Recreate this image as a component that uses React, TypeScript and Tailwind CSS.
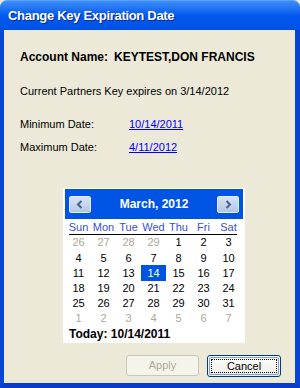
import React from "react";

const FONT = { fontFamily: '"Liberation Sans", Tahoma, Arial, sans-serif' };

const weeks: { d: number; dim?: boolean }[][] = [
  [{ d: 26, dim: true }, { d: 27, dim: true }, { d: 28, dim: true }, { d: 29, dim: true }, { d: 1 }, { d: 2 }, { d: 3 }],
  [{ d: 4 }, { d: 5 }, { d: 6 }, { d: 7 }, { d: 8 }, { d: 9 }, { d: 10 }],
  [{ d: 11 }, { d: 12 }, { d: 13 }, { d: 14 }, { d: 15 }, { d: 16 }, { d: 17 }],
  [{ d: 18 }, { d: 19 }, { d: 20 }, { d: 21 }, { d: 22 }, { d: 23 }, { d: 24 }],
  [{ d: 25 }, { d: 26 }, { d: 27 }, { d: 28 }, { d: 29 }, { d: 30 }, { d: 31 }],
  [{ d: 1, dim: true }, { d: 2, dim: true }, { d: 3, dim: true }, { d: 4, dim: true }, { d: 5, dim: true }, { d: 6, dim: true }, { d: 7, dim: true }],
];

function NavButton({ dir }: { dir: "left" | "right" }) {
  return (
    <div className="w-[22px] h-[17px] rounded-[2px] border border-[#e6ecf8] bg-gradient-to-b from-[#d7e2f6] to-[#b4c6ea] flex items-center justify-center">
      <svg width="8" height="9" viewBox="0 0 8 9">
        {dir === "left" ? (
          <path d="M5.5 1 L2 4.5 L5.5 8" stroke="#4d6185" strokeWidth="2" fill="none" />
        ) : (
          <path d="M2.5 1 L6 4.5 L2.5 8" stroke="#4d6185" strokeWidth="2" fill="none" />
        )}
      </svg>
    </div>
  );
}

export default function App() {
  return (
    <div className="w-[300px] h-[388px] flex flex-col bg-[#ece9d8] text-[11px] text-black" style={FONT}>
      {/* Title bar */}
      <div className="h-[30px] shrink-0 rounded-t-[7px] bg-gradient-to-b from-[#3d8ef8] via-[#0058ee] to-[#0052e6] border-t border-[#5aa0ff] flex items-center pl-[8px]">
        <span
          className="text-white font-bold text-[13px] tracking-[-0.3px]"
          style={{ textShadow: "1px 1px 0 #0a2a8a" }}
        >
          Change Key Expiration Date
        </span>
      </div>
      {/* Window body */}
      <div className="flex-1 flex flex-col border-l-[4px] border-r-[5px] border-b-[5px] border-l-[#0846d8] border-r-[#0842d2] border-b-[#0a3ac8]">
        <div className="flex-1 flex flex-col bg-[#ece9d8] pl-[16px] pr-[8px]">
          <div className="mt-[20px] h-[14px] flex items-center font-bold text-[12px]">
            <span>Account Name:</span>
            <span className="ml-[6px]">KEYTEST,DON FRANCIS</span>
          </div>
          <div className="mt-[20px] h-[14px] flex items-center">Current Partners Key expires on 3/14/2012</div>
          <div className="mt-[19px] h-[14px] flex items-center">
            <span className="w-[109px]">Minimum Date:</span>
            <span className="text-[#0000ff] underline">10/14/2011</span>
          </div>
          <div className="mt-[9px] h-[14px] flex items-center">
            <span className="w-[109px]">Maximum Date:</span>
            <span className="text-[#0000ff] underline">4/11/2012</span>
          </div>
          {/* Calendar */}
          <div className="mt-[34px] ml-[43px] w-[182px] h-[155px] bg-white flex flex-col px-[2px] pt-[1px]">
            <div className="h-[30px] bg-[#0054e3] flex items-center justify-between px-[4px]">
              <NavButton dir="left" />
              <span className="text-white font-bold text-[12px]">March, 2012</span>
              <NavButton dir="right" />
            </div>
            <div className="mx-[1px]">
              <div className="grid grid-cols-7 w-[175px] h-[14px] mt-[1px] text-[#3a4fd8]">
                {["Sun", "Mon", "Tue", "Wed", "Thu", "Fri", "Sat"].map((n) => (
                  <div key={n} className="text-center leading-[14px]">{n}</div>
                ))}
              </div>
              <div className="ml-[3px] w-[168px] h-px bg-black" />
              <div className="grid grid-cols-7 grid-rows-6 w-[175px] h-[91px]">
                {weeks.flat().map((c, i) => {
                  const sel = i === 17;
                  return (
                    <div key={i} className="flex items-center justify-center">
                      <div
                        className={
                          "w-[25px] h-[16px] flex items-center justify-center " +
                          (sel ? "bg-[#0054e3] text-white" : c.dim ? "text-[#aca899]" : "text-black")
                        }
                      >
                        {c.d}
                      </div>
                    </div>
                  );
                })}
              </div>
              <div className="pl-[3px] h-[16px] flex items-center font-bold text-[12px]">Today: 10/14/2011</div>
            </div>
          </div>
          <div className="flex-1" />
          {/* Buttons */}
          <div className="flex justify-end gap-[8px] mb-[6px] mr-[6px]">
            <div className="w-[73px] h-[21px] rounded-[3px] border border-[#c9c7ba] bg-[#f5f4ea] text-[#aca899] flex items-center justify-center">
              Apply
            </div>
            <div className="w-[74px] h-[22px] rounded-[3px] border border-[#003c74] bg-gradient-to-b from-[#ffffff] to-[#ecebe6] p-[1px]">
              <div className="w-full h-full rounded-[2px] border border-[#7fa0e8] p-[1px]">
                <div className="w-full h-full border border-dotted border-black flex items-center justify-center">
                  Cancel
                </div>
              </div>
            </div>
          </div>
        </div>
      </div>
    </div>
  );
}
